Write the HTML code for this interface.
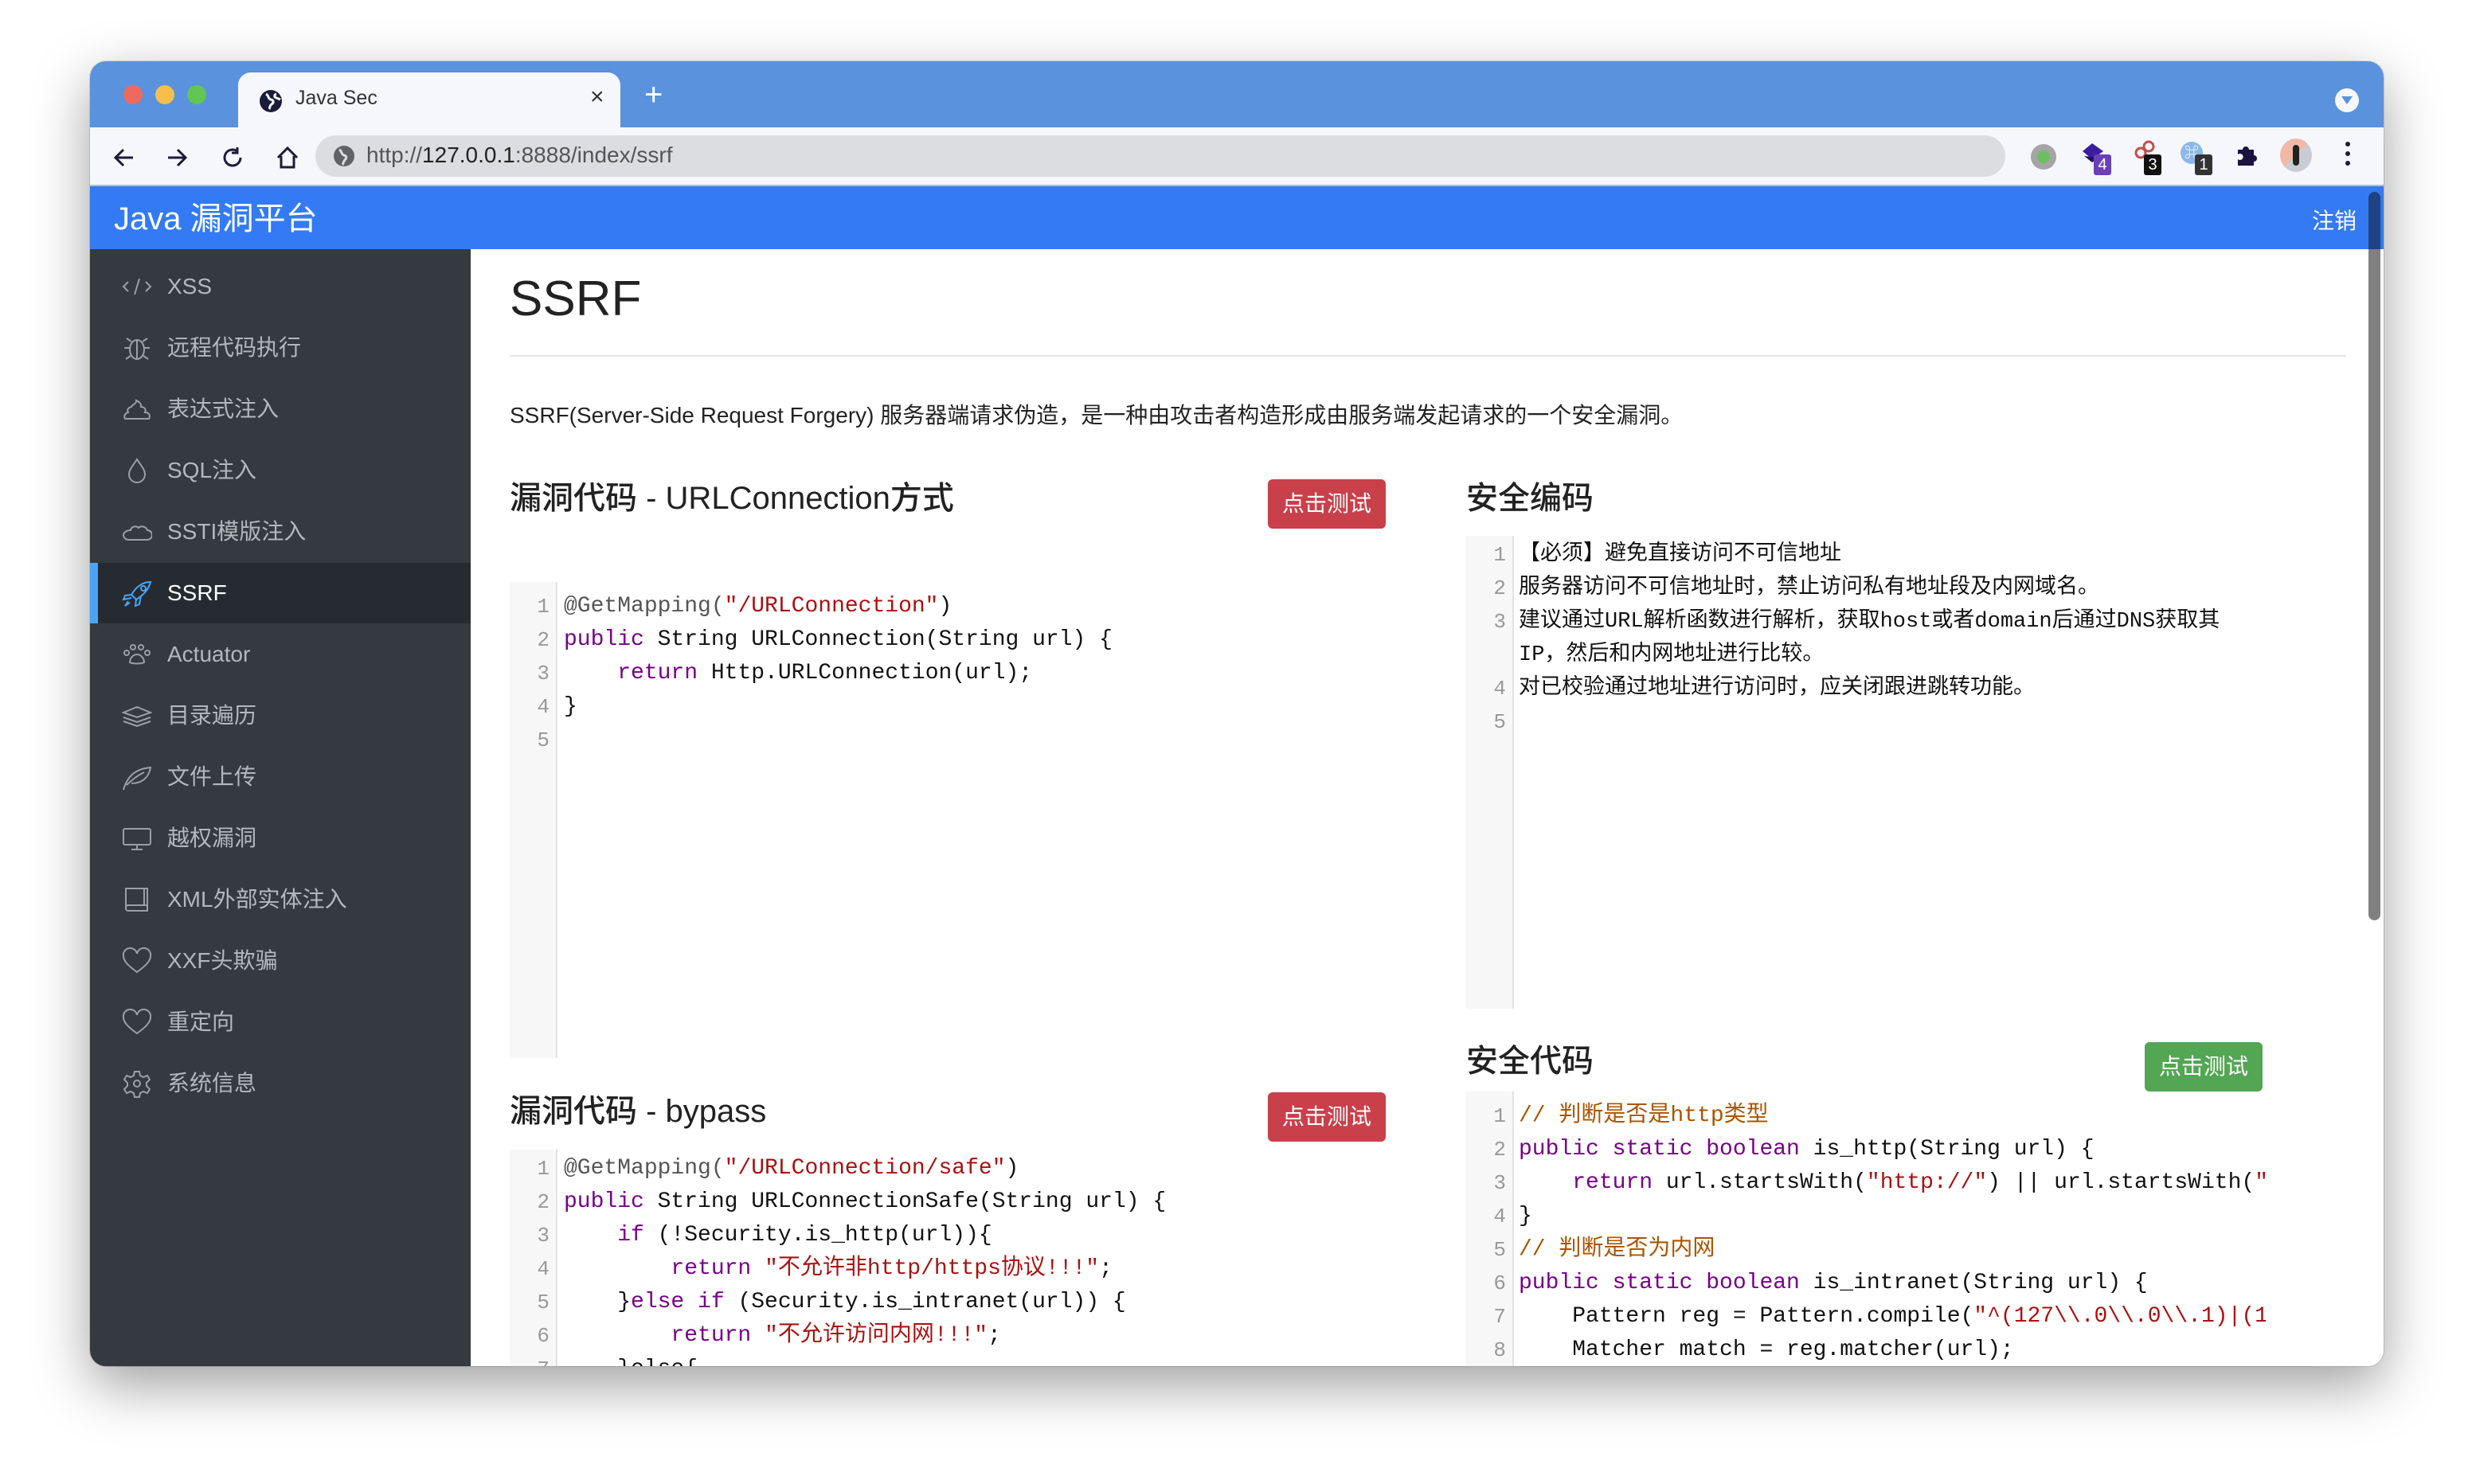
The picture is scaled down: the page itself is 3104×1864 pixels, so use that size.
<!DOCTYPE html>
<html><head><meta charset="utf-8">
<style>
*{margin:0;padding:0;box-sizing:border-box}
body{width:3104px;height:1864px;background:#fff;position:relative;overflow:hidden;font-family:"Liberation Sans","Noto Sans CJK SC",sans-serif}
#win{position:absolute;left:113px;top:77px;width:2880px;height:1639px;border-radius:20px;overflow:hidden;background:#fff;box-shadow:0 24px 70px rgba(0,0,0,.38),0 0 0 1px rgba(0,0,0,.12)}
.a{position:absolute}
.tabbar{left:0;top:0;width:100%;height:83px;background:#5a92dd}
.dot{width:24px;height:24px;border-radius:50%;top:30px}
.tab{left:186px;top:14px;width:480px;height:70px;background:#f5f7fc;border-radius:16px 16px 0 0}
.toolbar{left:0;top:83px;width:100%;height:74px;background:#f5f7fc;border-bottom:2px solid #b9bcc2}
.addr{left:283px;top:10px;width:2122px;height:52px;border-radius:26px;background:#dcdde1}
.hdr{left:0;top:157px;width:100%;height:79px;background:#337af4;color:#fff}
.side{left:0;top:236px;width:478px;height:1410px;background:#343a40}
.item{position:absolute;left:0;width:478px;height:76px;color:#b4b8bc;font-size:28px;line-height:76px}
.item span{position:absolute;left:97px}
.item svg{position:absolute;left:40px;top:20px}
.item.act{background:#262b32;color:#fff}
.item.act:before{content:"";position:absolute;left:0;top:0;width:10px;height:76px;background:#4ba3f5}
.main{left:478px;top:236px;width:2400px;height:1410px;background:#fff}
h3{position:absolute;font-weight:500;font-size:40px;color:#222;white-space:nowrap;line-height:46px}
.btn{position:absolute;color:#fff;font-size:28px;text-align:center;border-radius:6px;line-height:62px;height:62px}
.code{position:absolute;font-family:"Liberation Mono","Noto Sans CJK SC",monospace;font-size:28px;line-height:42px;white-space:pre;color:#111}
.gut{position:absolute;background:#f7f7f7;border-right:2px solid #e3e3e3;width:60px}
.ln{position:absolute;color:#999;font-family:"Liberation Mono",monospace;font-size:26px;line-height:42px;text-align:right;width:50px}
.k{color:#770088}.s{color:#aa1111}.c{color:#aa5500}.g{color:#555}
</style></head><body>
<div id="win">
 <div class="a tabbar">
  <div class="a dot" style="left:42px;background:#ee6a5f"></div>
  <div class="a dot" style="left:82px;background:#f5be4f"></div>
  <div class="a dot" style="left:122px;background:#62c554"></div>
  <div class="a tab">
   <svg class="a" style="left:26px;top:21px" width="30" height="30" viewBox="0 0 30 30"><circle cx="15" cy="15" r="14" fill="#1b1b3a"/><path d="M9 6c4 2 2 6 6 7s4 4 1 6-2 5-3 6M22 6c-3 1-3 4 0 5s5 2 5 2" stroke="#f5f7fc" stroke-width="3" fill="none"/></svg>
   <div class="a" style="left:72px;top:18px;font-size:25px;color:#333">Java Sec</div>
   <div class="a" style="left:442px;top:14px;font-size:30px;color:#333">×</div>
  </div>
  <div class="a" style="left:696px;top:22px;font-size:40px;color:#fff;line-height:40px">+</div>
  <div class="a" style="left:2819px;top:34px;width:30px;height:30px;border-radius:50%;background:#f5f7fc"><div class="a" style="left:8px;top:10px;border-left:7px solid transparent;border-right:7px solid transparent;border-top:10px solid #5a92dd"></div></div>
 </div>
 <div class="a toolbar">
  <svg class="a" style="left:28px;top:22px" width="300" height="32" viewBox="0 0 300 32" fill="none" stroke="#1b1b3a" stroke-width="3">
   <path d="M26 16H4M14 6L4 16l10 10"/>
   <path d="M70 16h22M82 6l10 10-10 10"/>
   <path d="M157 8a10 10 0 1 0 4 8M157 3v7h-7"/>
   <path d="M208 16l12-12 12 12M212 14v14h16V14"/>
  </svg>
  <div class="a addr">
   <svg class="a" style="left:22px;top:12px" width="28" height="28" viewBox="0 0 28 28"><circle cx="14" cy="14" r="13" fill="#5f6368"/><path d="M8 6c4 2 2 6 6 7s3 4 1 6-2 5-3 6" stroke="#dcdde1" stroke-width="3" fill="none"/></svg>
   <div class="a" style="left:64px;top:9px;font-size:28px;color:#555">http://<span style="color:#222">127.0.0.1</span>:8888/index/ssrf</div>
  </div>
  <div class="a" style="left:2437px;top:21px;width:32px;height:32px;border-radius:50%;background:#a5a5a5"><div class="a" style="left:8px;top:8px;width:16px;height:16px;border-radius:50%;background:#6cbf5f"></div></div>
  <svg class="a" style="left:2500px;top:16px" width="40" height="40"><path d="M14 4l14 10-14 10L2 14z" fill="#3a1e9e"/><path d="M4 20l10 8 8-6" fill="#241060"/></svg>
  <div class="a" style="left:2516px;top:34px;width:22px;height:26px;background:#6a3fb8;color:#fff;font-size:20px;text-align:center;line-height:26px;border-radius:3px">4</div>
  <svg class="a" style="left:2563px;top:14px" width="40" height="40"><circle cx="12" cy="18" r="6" stroke="#c0504d" stroke-width="3" fill="none"/><circle cx="22" cy="10" r="6" stroke="#c0504d" stroke-width="3" fill="none"/><path d="M18 20l10 10" stroke="#c0504d" stroke-width="3"/></svg>
  <div class="a" style="left:2579px;top:34px;width:22px;height:26px;background:#111;color:#fff;font-size:20px;text-align:center;line-height:26px;border-radius:3px">3</div>
  <div class="a" style="left:2625px;top:18px;width:28px;height:28px;border-radius:50%;background:#8bb8e8;color:#fff;font-size:18px;text-align:center;line-height:28px">⌘</div>
  <div class="a" style="left:2643px;top:34px;width:22px;height:26px;background:#333;color:#fff;font-size:20px;text-align:center;line-height:26px;border-radius:3px">1</div>
  <svg class="a" style="left:2693px;top:20px" width="30" height="30" viewBox="0 0 30 30"><path d="M4 8h6a4 4 0 1 1 8 0h6v7a4 4 0 1 1 0 8v5H4v-8a4 4 0 1 0 0-6z" fill="#1b1240"/></svg>
  <div class="a" style="left:2750px;top:14px;width:40px;height:42px;border-radius:50%;background:linear-gradient(135deg,#f0b8a5 50%,#c9cdd3 50%)"><div class="a" style="left:16px;top:8px;width:8px;height:26px;background:#222;border-radius:4px"></div></div>
  <div class="a" style="left:2832px;top:18px;width:6px;height:6px;border-radius:3px;background:#1b1b3a;box-shadow:0 12px 0 #1b1b3a,0 24px 0 #1b1b3a"></div>
 </div>
 <div class="a hdr">
  <div class="a" style="left:30px;top:8px;font-size:40px">Java 漏洞平台</div>
  <div class="a" style="left:2790px;top:22px;font-size:28px">注销</div>
 </div>
 <div class="a side">
  <div class="item" style="top:9px"><svg width="38" height="36" viewBox="0 0 38 36" fill="none" stroke="#9aa0a6" stroke-width="2"><path d="M8 12l-6 6 6 6M30 12l6 6-6 6M22 8l-6 20"/></svg><span>XSS</span></div>
  <div class="item" style="top:86px"><svg width="38" height="36" viewBox="0 0 38 36" fill="none" stroke="#9aa0a6" stroke-width="2"><ellipse cx="19" cy="20" rx="9" ry="12"/><path d="M19 8v24M10 18H3M28 18h7M11 28l-6 4M27 28l6 4M12 10L6 6M26 10l6-4"/></svg><span>远程代码执行</span></div>
  <div class="item" style="top:163px"><svg width="38" height="36" viewBox="0 0 38 36" fill="none" stroke="#9aa0a6" stroke-width="2"><path d="M4 30h30c3-6-2-8-5-8 2-4-1-7-5-7 1-4-3-7-6-8 1 4-5 5-6 8-4 1-6 4-4 7-4 1-6 5-4 8z"/></svg><span>表达式注入</span></div>
  <div class="item" style="top:240px"><svg width="38" height="36" viewBox="0 0 38 36" fill="none" stroke="#9aa0a6" stroke-width="2"><path d="M19 4c-6 9-10 13-10 19a10 10 0 0 0 20 0c0-6-4-10-10-19z"/></svg><span>SQL注入</span></div>
  <div class="item" style="top:317px"><svg width="38" height="36" viewBox="0 0 38 36" fill="none" stroke="#9aa0a6" stroke-width="2"><path d="M8 28h24a6 6 0 0 0 0-12c-2-5-8-6-11-3-3-3-9-2-10 3-5 0-9 3-9 6s3 6 6 6z"/></svg><span>SSTI模版注入</span></div>
  <div class="item act" style="top:394px"><svg width="38" height="36" viewBox="0 0 38 36" fill="none" stroke="#4ba3f5" stroke-width="2"><path d="M36 4C26 4 18 10 12 20l6 6c10-6 16-14 18-22zM12 20l-8 1-2 5 10-2M18 26l-1 8 5-2 2-10M8 28l-4 6 6-4"/><circle cx="27" cy="12" r="3"/></svg><span>SSRF</span></div>
  <div class="item" style="top:471px"><svg width="38" height="36" viewBox="0 0 38 36" fill="none" stroke="#9aa0a6" stroke-width="2"><circle cx="6" cy="16" r="3"/><circle cx="14" cy="9" r="3"/><circle cx="24" cy="9" r="3"/><circle cx="32" cy="16" r="3"/><path d="M10 28c0-6 5-10 9-10s9 4 9 10c-4 2-14 2-18 0z"/></svg><span>Actuator</span></div>
  <div class="item" style="top:548px"><svg width="38" height="36" viewBox="0 0 38 36" fill="none" stroke="#9aa0a6" stroke-width="2"><path d="M2 14l17-7 17 7-17 6zM2 20l17 6 17-6M2 25l17 6 17-6"/></svg><span>目录遍历</span></div>
  <div class="item" style="top:625px"><svg width="38" height="36" viewBox="0 0 38 36" fill="none" stroke="#9aa0a6" stroke-width="2"><path d="M2 34C6 20 14 8 36 6c-2 12-10 20-24 20M6 28c8-8 14-12 22-16"/></svg><span>文件上传</span></div>
  <div class="item" style="top:702px"><svg width="38" height="36" viewBox="0 0 38 36" fill="none" stroke="#9aa0a6" stroke-width="2"><rect x="2" y="6" width="34" height="20" rx="2"/><path d="M19 26v6M12 32h14"/></svg><span>越权漏洞</span></div>
  <div class="item" style="top:779px"><svg width="38" height="36" viewBox="0 0 38 36" fill="none" stroke="#9aa0a6" stroke-width="2"><path d="M6 4h26v28H8a3 3 0 0 1-3-3V4zM5 28a3 3 0 0 1 3-3h24M28 4v21"/></svg><span>XML外部实体注入</span></div>
  <div class="item" style="top:856px"><svg width="38" height="36" viewBox="0 0 38 36" fill="none" stroke="#9aa0a6" stroke-width="2"><path d="M19 32C8 24 2 18 2 12a8 8 0 0 1 17-3 8 8 0 0 1 17 3c0 6-6 12-17 20z"/></svg><span>XXF头欺骗</span></div>
  <div class="item" style="top:933px"><svg width="38" height="36" viewBox="0 0 38 36" fill="none" stroke="#9aa0a6" stroke-width="2"><path d="M19 32C8 24 2 18 2 12a8 8 0 0 1 17-3 8 8 0 0 1 17 3c0 6-6 12-17 20z"/></svg><span>重定向</span></div>
  <div class="item" style="top:1010px"><svg width="38" height="36" viewBox="0 0 38 36" fill="none" stroke="#9aa0a6" stroke-width="2"><path d="M16 3h6l1 5 4 2 5-2 3 5-4 4v4l4 4-3 5-5-2-4 2-1 5h-6l-1-5-4-2-5 2-3-5 4-4v-4L3 13l3-5 5 2 4-2z"/><circle cx="19" cy="18" r="4"/></svg><span>系统信息</span></div>
 </div>
 <div class="a main">
  <div class="a" style="left:49px;top:23px;font-size:62px;font-weight:500;color:#222;line-height:80px">SSRF</div>
  <div class="a" style="left:49px;top:133px;width:2306px;height:2px;background:#e5e5e5"></div>
  <div class="a" style="left:49px;top:187px;font-size:28px;color:#222;white-space:nowrap">SSRF(Server-Side Request Forgery) 服务器端请求伪造，是一种由攻击者构造形成由服务端发起请求的一个安全漏洞。</div>

  <h3 style="left:49px;top:290px">漏洞代码 - URLConnection方式</h3>
  <div class="btn" style="left:1001px;top:289px;width:148px;background:#c9404a">点击测试</div>
  <div class="gut" style="left:49px;top:418px;height:598px"></div>
  <div class="ln" style="left:49px;top:428px">1<br>2<br>3<br>4<br>5</div>
  <div class="code" style="left:117px;top:428px"><span class="g">@GetMapping(</span><span class="s">"/URLConnection"</span>)
<span class="k">public</span> String URLConnection(String url) {
    <span class="k">return</span> Http.URLConnection(url);
}
</div>

  <h3 style="left:49px;top:1060px">漏洞代码 - bypass</h3>
  <div class="btn" style="left:1001px;top:1059px;width:148px;background:#c9404a">点击测试</div>
  <div class="gut" style="left:49px;top:1131px;height:300px"></div>
  <div class="ln" style="left:49px;top:1134px">1<br>2<br>3<br>4<br>5<br>6<br>7</div>
  <div class="code" style="left:117px;top:1134px"><span class="g">@GetMapping(</span><span class="s">"/URLConnection/safe"</span>)
<span class="k">public</span> String URLConnectionSafe(String url) {
    <span class="k">if</span> (!Security.is_http(url)){
        <span class="k">return</span> <span class="s">"不允许非http/https协议!!!"</span>;
    }<span class="k">else if</span> (Security.is_intranet(url)) {
        <span class="k">return</span> <span class="s">"不允许访问内网!!!"</span>;
    }else{</div>

  <h3 style="left:1250px;top:290px">安全编码</h3>
  <div class="gut" style="left:1250px;top:360px;height:594px"></div>
  <div class="ln" style="left:1250px;top:363px">1<br>2<br>3<br><br>4<br>5</div>
  <div class="code" style="left:1316px;top:363px;font-size:27px">【必须】避免直接访问不可信地址
服务器访问不可信地址时，禁止访问私有地址段及内网域名。
建议通过URL解析函数进行解析，获取host或者domain后通过DNS获取其
IP，然后和内网地址进行比较。
对已校验通过地址进行访问时，应关闭跟进跳转功能。
</div>

  <h3 style="left:1250px;top:997px">安全代码</h3>
  <div class="btn" style="left:2102px;top:996px;width:148px;background:#53a653">点击测试</div>
  <div class="gut" style="left:1250px;top:1058px;height:360px"></div>
  <div style="position:absolute;left:1316px;top:1068px;width:938px;height:360px;overflow:hidden">
  <div class="code" style="left:0;top:0"><span class="c">// 判断是否是http类型</span>
<span class="k">public static boolean</span> is_http(String url) {
    <span class="k">return</span> url.startsWith(<span class="s">"http://"</span>) || url.startsWith(<span class="s">"https://"</span>);
}
<span class="c">// 判断是否为内网</span>
<span class="k">public static boolean</span> is_intranet(String url) {
    Pattern reg = Pattern.compile(<span class="s">"^(127\\.0\\.0\\.1)|(10\\..*)"</span>);
    Matcher match = reg.matcher(url);</div></div>
  <div class="ln" style="left:1250px;top:1068px">1<br>2<br>3<br>4<br>5<br>6<br>7<br>8</div>
 </div>
 <div class="a" style="left:2861px;top:164px;width:15px;height:915px;border-radius:8px;background:#808080"></div>
 <div class="a" style="left:2861px;top:164px;width:15px;height:72px;border-radius:8px 8px 0 0;background:#1e4282"></div>
</div>
</body></html>
